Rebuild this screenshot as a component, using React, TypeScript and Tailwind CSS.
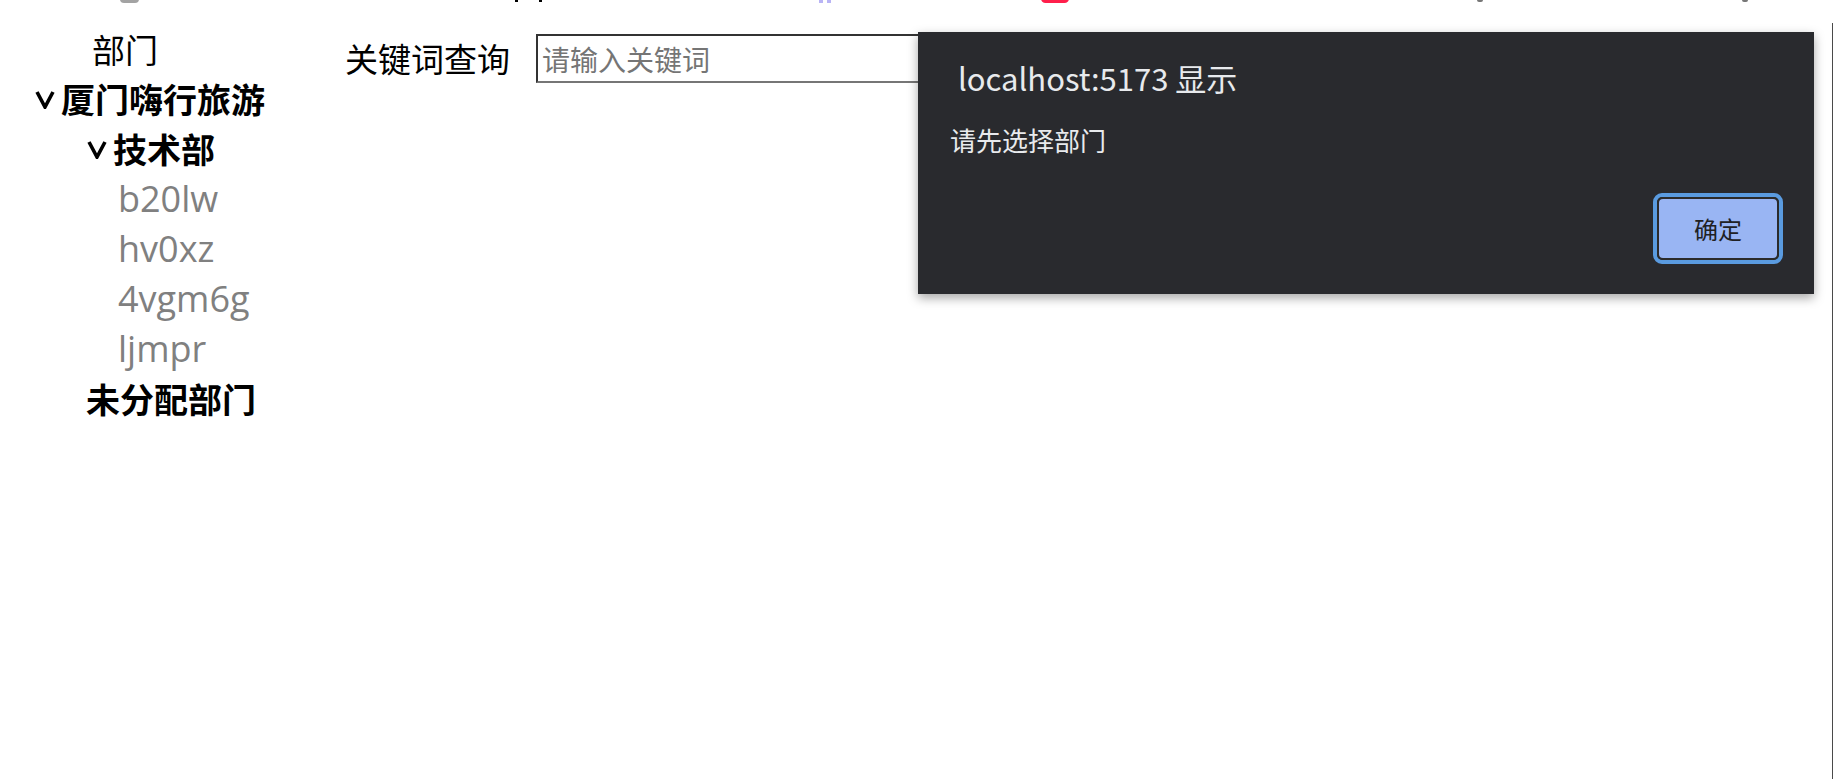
import React from "react";

const leaves = ["b20lw", "hv0xz", "4vgm6g", "ljmpr"];

function Chevron() {
  return (
    <svg width="20" height="20" viewBox="0 0 20 20" className="shrink-0">
      <polyline points="2,3 10,18 18,3" fill="none" stroke="#000" strokeWidth="3.6" strokeLinejoin="miter" />
    </svg>
  );
}

export default function App() {
  return (
    <div className="relative h-[779px] w-full overflow-hidden bg-white font-['Noto_Sans_CJK_SC',sans-serif] text-black">
      {/* clipped bits of the page scrolled above */}
      <div className="absolute left-[120px] top-[-6px] h-[9px] w-[19px] rounded-b bg-[#a3a3a3]" />
      <div className="absolute left-[515px] top-0 h-[2px] w-[3px] bg-black" />
      <div className="absolute left-[539px] top-0 h-[2px] w-[3px] bg-black" />
      <div className="absolute left-[819px] top-0 h-[3px] w-[4px] bg-[#b9b4f5]" />
      <div className="absolute left-[827px] top-0 h-[3px] w-[4px] bg-[#b9b4f5]" />
      <div className="absolute left-[1041px] top-[-6px] h-[9px] w-[28px] rounded-full bg-[#ff1f4b]" />
      <div className="absolute left-[1477px] top-0 h-[2px] w-[6px] rounded-b bg-[#777]" />
      <div className="absolute left-[1742px] top-0 h-[2px] w-[6px] rounded-b bg-[#777]" />

      <div className="mt-[23px] flex h-[756px] border-r border-[#4a4a4a]">
        {/* department tree */}
        <aside className="w-[280px] shrink-0 pt-px text-[34px] leading-[50px]">
          <div className="pl-[92px] text-[33px] font-normal">部门</div>
          <div className="flex items-center gap-[6px] pl-[35px] font-bold">
            <Chevron />
            <span>厦门嗨行旅游</span>
          </div>
          <div className="flex items-center gap-[6px] pl-[87px] font-bold">
            <Chevron />
            <span>技术部</span>
          </div>
          {leaves.map((l) => (
            <div key={l} className="pl-[118px] font-['Open_Sans',sans-serif] text-[36px] text-[#808080]">
              {l}
            </div>
          ))}
          <div className="pl-[86px] font-bold">未分配部门</div>
        </aside>

        {/* search */}
        <main className="flex-1 pt-[11px] pl-[65px]">
          <div className="flex items-center gap-[26px]">
            <label className="text-[33px] leading-[49px]">关键词查询</label>
            <input
              placeholder="请输入关键词"
              className="h-[49px] w-[520px] border-2 border-t-[#333] border-l-[#333] border-b-[#767676] border-r-[#767676] px-[4px] text-[28px] placeholder:text-[#757575] outline-none"
            />
          </div>
        </main>
      </div>

      {/* alert dialog */}
      <div className="absolute left-[918px] top-[32px] flex h-[262px] w-[896px] flex-col bg-[#292a2e] shadow-[0_4px_10px_rgba(0,0,0,0.35)]">
        <div className="pl-[40px] pt-[22px] text-[31px] leading-[48px] text-[#e8eaed]">localhost:5173 显示</div>
        <div className="pl-[32px] pt-[20px] text-[26px] leading-[36px] text-[#e8eaed]">请先选择部门</div>
        <div className="mt-auto flex justify-end pb-[30px] pr-[31px]">
          <button className="flex h-[71px] w-[130px] items-center justify-center rounded-[9px] border-[4px] border-[#5a9be0] bg-[#2a2a2a] p-0">
            <span className="flex h-full w-full items-center justify-center rounded-[6px] border-2 border-[#2b2b2b] bg-[#99b5f3] text-[24px] text-[#202124]">
              确定
            </span>
          </button>
        </div>
      </div>
    </div>
  );
}
